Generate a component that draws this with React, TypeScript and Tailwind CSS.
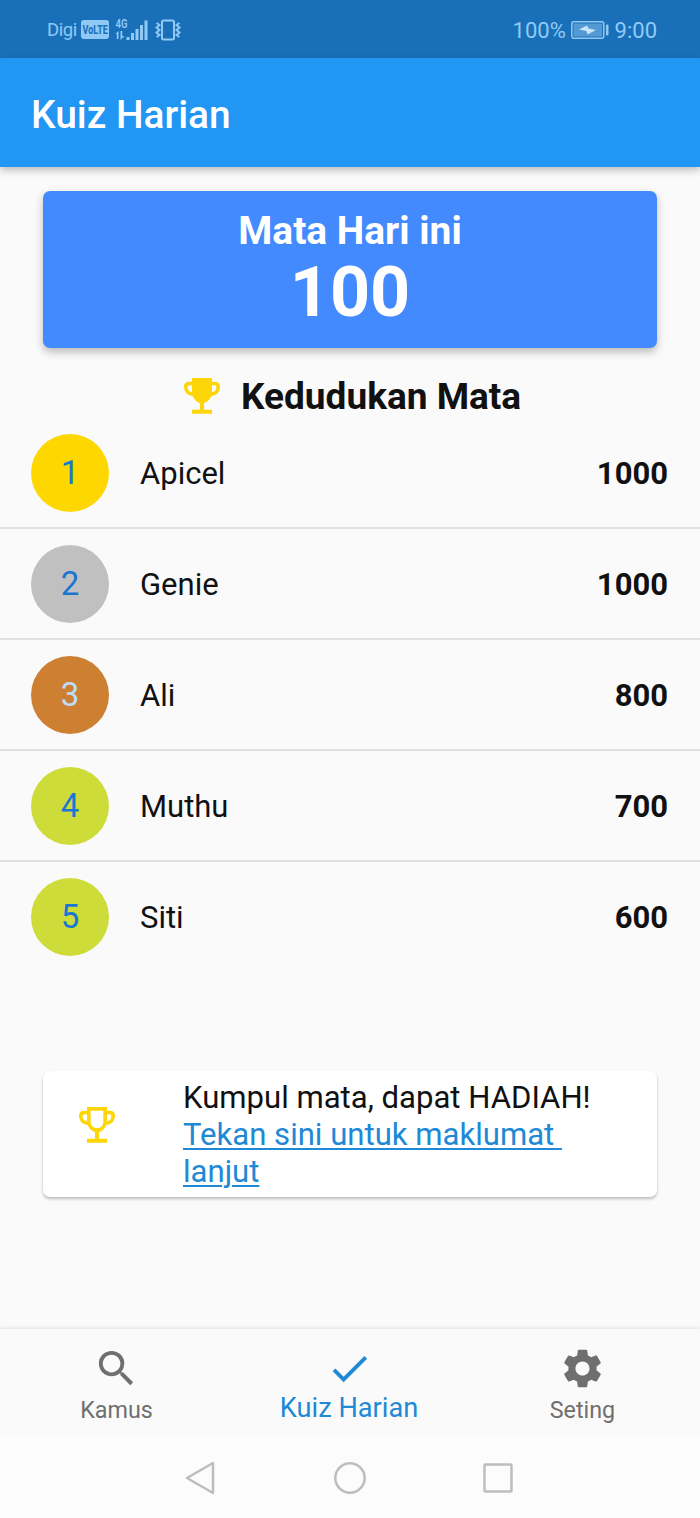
import { MdCheck, MdSearch, MdSettings } from "react-icons/md";

const players = [
  { rank: 1, name: "Apicel", points: 1000, badge: "bg-[#ffd700] text-[#1976d2]" },
  { rank: 2, name: "Genie", points: 1000, badge: "bg-[#c0c0c0] text-[#1976d2]" },
  { rank: 3, name: "Ali", points: 800, badge: "bg-[#cd7f32] text-[#bbdefb]" },
  { rank: 4, name: "Muthu", points: 700, badge: "bg-[#cddc39] text-[#1976d2]" },
  { rank: 5, name: "Siti", points: 600, badge: "bg-[#cddc39] text-[#1976d2]" },
];

function StatusBar() {
  return (
    <div className="flex h-[58px] items-center justify-between bg-[#1a70b8] pl-[47px] pr-[43px] pt-px text-[#90c9f5]">
      <div className="flex items-center">
        <span className="w-[30px] pt-0.5 text-[18.5px] leading-none tracking-[-0.4px]">Digi</span>
        <svg width="28" height="19" viewBox="0 0 28 19" className="ml-1 overflow-visible">
          <rect width="28" height="19" rx="3" fill="#90c9f5" />
          <text transform="translate(1.5 14) scale(0.72 1)" fontSize="12.5" fontWeight="800" fill="#1a70b8">
            VoLTE
          </text>
        </svg>
        <svg width="34" height="30" viewBox="0 -4 34 30" className="ml-1.5" fill="currentColor">
          <text x="0.5" y="9" fontSize="12" fontWeight="600" textLength="12" lengthAdjust="spacingAndGlyphs">
            4G
          </text>
          <path d="M0.500 15l3-3v8H1.800v-5zM5.500 12h1.700v5h2.300l-4 4z" />
          <rect x="11.500" y="18" width="3" height="3" />
          <rect x="16" y="14" width="3" height="7" />
          <rect x="20.500" y="10" width="3" height="11" />
          <rect x="25" y="6" width="3" height="15" />
          <rect x="29.500" y="1.500" width="3" height="19.500" />
        </svg>
        <svg width="28" height="22" viewBox="0 0 28 22" className="ml-1.5" fill="none" stroke="currentColor" strokeWidth="2">
          <rect x="7" y="1.500" width="12" height="19" rx="1.500" />
          <path d="M1.500 4l3 2-3 2.500 3 2.500-3 2.500 3 2.500-3 2M24.500 4l-3 2 3 2.500-3 2.500 3 2.500-3 2.500 3 2" />
        </svg>
      </div>
      <div className="flex items-center text-[22px] leading-none">
        <span className="w-[52px] pt-0.5">100%</span>
        <svg width="38" height="18" viewBox="0 0 38 18" className="ml-1.5 mr-1.5">
          <rect x="0.800" y="0.800" width="32" height="16.500" rx="2" fill="#1a70b8" stroke="#90c9f5" strokeWidth="1.500" />
          <rect x="2.500" y="2.500" width="28.600" height="13.100" fill="#5499d3" />
          <path d="M8 8.500l8-4 1.500 3 7.500 1.500-8.500 4.500-1-3.500z" fill="#c8e5fb" />
          <rect x="35" y="3.500" width="2.500" height="11" rx="1" fill="#90c9f5" />
        </svg>
        <span className="pt-0.5">9:00</span>
      </div>
    </div>
  );
}

function TrophyIcon({ outlined = false }: { outlined?: boolean }) {
  return (
    <svg width="36" height="36" viewBox="0 0 108 108" fill="#fdd60a" fillRule="evenodd">
      <path d="M24 0H84V11H93C102 11 108 17 108 25C108 43 98 53 82 54C77 66 69 73 60 76V95H84V107H24V95H48V76C39 73 31 66 26 54C10 53 0 43 0 25C0 17 6 11 15 11H24ZM24 22H17C13 22 11 24 11 28C11 36 16 42 24 43ZM84 22V43C92 42 97 36 97 28C97 24 95 22 91 22Z" />
      {outlined && <path d="M35 11H73V44C73 56 64 63 54 63S35 56 35 44Z" fill="#fff" />}
    </svg>
  );
}

function ScoreCard() {
  return (
    <div className="mx-[43px] mt-6 h-[157px] rounded-[7px] bg-[#448aff] pt-[17px] text-center font-bold text-white shadow-[0_4px_8px_rgba(0,0,0,0.26)]">
      <h2 className="text-[38.9px] leading-[45px]">Mata Hari ini</h2>
      <p className="text-[70px] leading-[78px]">100</p>
    </div>
  );
}

function Leaderboard() {
  return (
    <ul>
      {players.map((player) => (
        <li key={player.rank} className="flex h-[111px] items-center border-b-2 border-[#e0e0e0] pl-[31px] pr-8 text-[31px] last:border-transparent">
          <div className={`flex size-[78px] items-center justify-center rounded-full text-[33px] ${player.badge}`}>
            <span>{player.rank}</span>
          </div>
          <span className="ml-[31px] pt-[3px]">{player.name}</span>
          <span className="ml-auto pt-[3px] font-bold">{player.points}</span>
        </li>
      ))}
    </ul>
  );
}

function PrizeCard() {
  return (
    <div className="mx-[43px] mt-[98px] flex h-[126px] rounded-[7px] bg-white pl-9 shadow-[0_2px_3px_rgba(0,0,0,0.25)]">
      <div className="mt-9">
        <TrophyIcon outlined />
      </div>
      <div className="ml-[68px] pt-2 text-[31.1px] leading-[37px]">
        <p>Kumpul mata, dapat HADIAH!</p>
        <a href="#" className="whitespace-pre text-[#2089d6] underline decoration-2 underline-offset-[3px]">
          {"Tekan sini untuk maklumat \nlanjut"}
        </a>
      </div>
    </div>
  );
}

function BottomTabs() {
  return (
    <nav className="mt-auto grid h-[109px] grid-cols-[233px_232px_235px] text-[#6f6f6f] shadow-[0_-1px_4px_rgba(0,0,0,0.1)]">
      <div className="flex flex-col items-center pt-4">
        <MdSearch size={47} />
        <span className="mt-1 text-[23.3px] leading-7">Kamus</span>
      </div>
      <div className="flex flex-col items-center pt-4 text-[#2089d6]">
        <MdCheck size={47} />
        <span className="mt-0.5 text-[27.2px] leading-7">Kuiz Harian</span>
      </div>
      <div className="flex flex-col items-center pt-4">
        <MdSettings size={47} />
        <span className="mt-1 text-[23.3px] leading-7">Seting</span>
      </div>
    </nav>
  );
}

function SystemNav() {
  return (
    <div className="flex h-[80px] items-center justify-center gap-[117px] bg-[#fcfcfc] pr-0.5">
      <svg width="32" height="34" viewBox="0 0 32 34" fill="none" stroke="#bdbdbd" strokeWidth="2.500" strokeLinejoin="round">
        <path d="M28 2V32L2 17Z" />
      </svg>
      <svg width="32" height="32" viewBox="0 0 32 32" fill="none" stroke="#bdbdbd" strokeWidth="2.500">
        <circle cx="16" cy="16" r="14.700" />
      </svg>
      <svg width="30" height="30" viewBox="0 0 30 30" fill="none" stroke="#bdbdbd" strokeWidth="2.500">
        <rect x="1.500" y="1.500" width="27" height="27" rx="1" />
      </svg>
    </div>
  );
}

export default function App() {
  return (
    <div className="flex h-[1518px] w-[700px] flex-col overflow-hidden bg-[#fafafa] font-[Roboto,sans-serif] text-[#111111]">
      <StatusBar />
      <header className="flex h-[109px] items-center bg-[#2196f3] pl-[31px] pt-1.5 shadow-[0_3px_8px_rgba(0,0,0,0.26)]">
        <h1 className="text-[38.9px] font-medium text-white">Kuiz Harian</h1>
      </header>
      <ScoreCard />
      <div className="mt-[25px] flex h-[45px] items-center pl-[184px]">
        <TrophyIcon />
        <h2 className="ml-[21px] pt-0.5 text-[37px] font-bold">Kedudukan Mata</h2>
      </div>
      <Leaderboard />
      <PrizeCard />
      <BottomTabs />
      <SystemNav />
    </div>
  );
}
